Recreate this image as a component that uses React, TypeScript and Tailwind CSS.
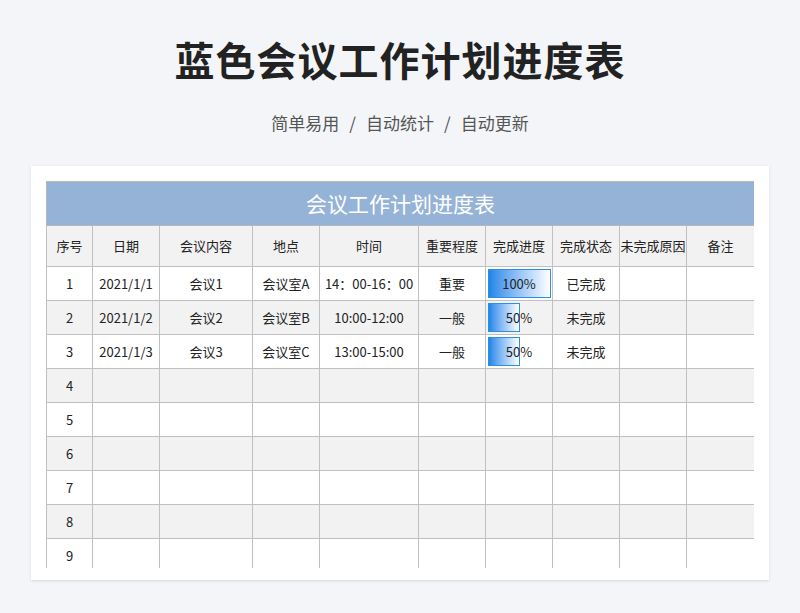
const cols = [46, 67, 93, 67, 99, 67, 67, 67, 67, 68];
const heads = ["序号", "日期", "会议内容", "地点", "时间", "重要程度", "完成进度", "完成状态", "未完成原因", "备注"];
const rows: (string | number)[][] = [
  ["1", "2021/1/1", "会议1", "会议室A", "14：00-16：00", "重要", 100, "已完成"],
  ["2", "2021/1/2", "会议2", "会议室B", "10:00-12:00", "一般", 50, "未完成"],
  ["3", "2021/1/3", "会议3", "会议室C", "13:00-15:00", "一般", 50, "未完成"],
  ["4"], ["5"], ["6"], ["7"], ["8"], ["9"],
];

export default function App() {
  return (
    <div className="w-[800px] h-[613px] bg-[#f3f5f8] flex flex-col items-center" style={{ fontFamily: '"Noto Sans CJK SC", "Noto Sans", sans-serif' }}>
      <h1 className="mt-[33px] text-[40px] leading-[52px] font-bold text-[#222] tracking-[1px]">蓝色会议工作计划进度表</h1>
      <p className="mt-[26px] text-[17px] leading-[24px] text-[#555]">简单易用<span className="mx-[10px]">/</span>自动统计<span className="mx-[10px]">/</span>自动更新</p>
      <div className="mt-[31px] w-[738px] h-[414px] bg-white shadow-sm px-[15px] pt-[15px]">
        <div className="h-[387px] overflow-hidden">
          <table className="border-collapse table-fixed text-[13px] text-[#222]" style={{ width: 708 }}>
            <colgroup>{cols.map((w, i) => <col key={i} style={{ width: w }} />)}</colgroup>
            <tbody>
              <tr>
                <td colSpan={10} className="h-[44px] bg-[#95b3d7] text-white text-[21px] text-center border border-[#b8b8b8]">会议工作计划进度表</td>
              </tr>
              <tr className="bg-[#f2f2f2]">
                {heads.map((h) => <td key={h} className="h-[41px] border border-[#c0c0c0] text-center whitespace-nowrap overflow-hidden p-0">{h}</td>)}
              </tr>
              {rows.map((r, ri) => (
                <tr key={ri} className={ri % 2 === 1 ? "bg-[#f2f2f2]" : "bg-white"}>
                  {cols.map((_, ci) => {
                    const v = r[ci];
                    if (ci === 6 && typeof v === "number") {
                      return (
                        <td key={ci} className="h-[34px] border border-[#c0c0c0] p-[2px] relative">
                          <div className="h-[29px] border border-[#2b8fe6] bg-gradient-to-r from-[#1a86e8] to-white" style={{ width: `${v * 0.63}px` }} />
                          <span className="absolute inset-0 flex items-center justify-center">{v}%</span>
                        </td>
                      );
                    }
                    return <td key={ci} className="h-[34px] border border-[#c0c0c0] text-center whitespace-nowrap overflow-hidden p-0">{v ?? ""}</td>;
                  })}
                </tr>
              ))}
            </tbody>
          </table>
        </div>
      </div>
    </div>
  );
}
